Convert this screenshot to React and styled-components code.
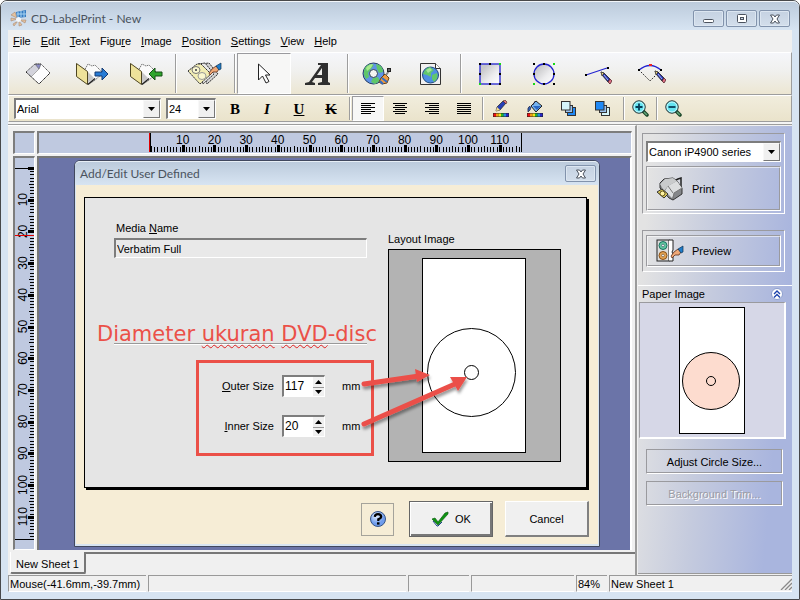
import React from "react";
import styled, { createGlobalStyle, css } from "styled-components";

const GlobalStyle = createGlobalStyle`
  *, *::before, *::after { box-sizing: border-box; }
  body { margin: 0; background: #fff; }
  body, button, input, select { font-family: "Liberation Sans", Arial, sans-serif; font-size: 11px; color: #000; }
  button { padding: 0; border: 0; background: none; }
  svg { display: block; flex: none; }
`;

const groove = css`
  border: 1px solid #9a9a9e;
  border-right-color: #fff;
  border-bottom-color: #fff;
`;

const sunken = css`
  border: 2px solid #7d7d7d;
  border-right: 1px solid #fff;
  border-bottom: 1px solid #fff;
`;

/* ---------- window frame ---------- */

const Frame = styled.div`
  display: flex;
  flex-direction: column;
  min-height: 100vh;
  padding: 0 7px 7px;
  border: 1px solid #48494b;
  border-radius: 7px 7px 0 0;
  background: #d7e4f2;
`;

const TitleBar = styled.header`
  display: flex;
  align-items: center;
  gap: 4px;
  height: 29px;
  margin: 0 -7px;
  padding: 5px 9px 0;
  border-top: 1px solid #f2f6fa;
  border-radius: 6px 6px 0 0;
  background: linear-gradient(#bccbdc, #d7e4f2);
`;

const Title = styled.h1`
  flex: 1;
  margin: 0;
  font: 12px/16px Lato, "Open Sans", sans-serif;
  color: #4a535e;
`;

const CaptionButton = styled.button`
  display: grid;
  place-items: center;
  width: 31px;
  height: 17px;
  margin-left: -2px;
  border: 1px solid #8293ac;
  border-radius: 2px;
  background: linear-gradient(#c5d2e2, #d3deeb);
  box-shadow: inset 0 0 0 1px #dce6f1;
`;

const CaptionButtons = styled.div`
  display: flex;
  gap: 4px;
`;

const MenuBar = styled.nav`
  display: flex;
  align-items: center;
  height: 22px;
  background: #f0f0f0;
`;

const MenuItem = styled.button`
  padding: 0 5px;
  line-height: 20px;
`;

/* ---------- toolbars ---------- */

const Toolbar = styled.div`
  display: flex;
  align-items: stretch;
  height: 43px;
  padding: 0 0 0 2px;
  border: 1px solid #fff;
  border-bottom-color: #9d9d9d;
  border-right-color: #9d9d9d;
  background: linear-gradient(#f5f6fa, #f0f0ee 45%, #ece6d2);
`;

const FormatBar = styled(Toolbar)`
  height: 27px;
  padding-left: 5px;
  background: linear-gradient(#f1eddd, #eae3cb);
`;

const BarEdge = styled.div`
  height: 3px;
  border-bottom: 1px solid #9d9d9d;
  background: #f4f4f4;
`;

const ToolButton = styled.button`
  display: grid;
  place-items: center;
  width: ${(p) => p.$w}px;
  ${(p) =>
    p.$on &&
    css`
      ${groove}
      background: #f7f7f6;
    `}
`;

const Separator = styled.div`
  width: 2px;
  margin: 1px 1px 1px 2px;
  border-left: 1px solid #9d9d9d;
  border-right: 1px solid #fff;
`;

const Combo = styled.div`
  display: grid;
  grid-template-columns: 1fr 17px;
  align-self: ${(p) => (p.$w ? "center" : "stretch")};
  width: ${(p) => (p.$w ? p.$w + "px" : "auto")};
  height: 21px;
  margin-right: ${(p) => p.$gap || 0}px;
  ${sunken}
  background: #fff;
`;

const ComboSelect = styled.select`
  grid-area: 1 / 1 / 2 / 3;
  min-width: 0;
  padding: 0 18px 0 1px;
  border: 0;
  outline: 0;
  appearance: none;
  background: transparent;
`;

const ComboArrow = styled.span`
  grid-area: 1 / 2;
  display: grid;
  place-items: center;
  border: 1px solid #f8f8f8;
  border-right-color: #777;
  border-bottom-color: #777;
  background: #f0f0f0;
  pointer-events: none;
`;

const Letter = styled.span`
  font: ${(p) => (p.$italic ? "italic" : "normal")} bold 15px/18px "Liberation Serif", serif;
  text-decoration: ${(p) => p.$line || "none"};
`;

/* ---------- work area ---------- */

const Main = styled.main`
  display: grid;
  grid-template-columns: 1fr 155px;
  flex: 1;
  background: #f0f0f0;
`;

const Work = styled.section`
  display: flex;
  flex-direction: column;
  min-width: 0;
  border-right: 2px solid #9b9b9b;
  border-top: 1px solid #fff;
`;

const Sheet = styled.div`
  display: grid;
  flex: 1;
  grid-template: 23px 1fr / 22px 1fr;
  gap: 2px;
  padding: 5px 3px 2px 5px;
`;

const Ruler = styled.div`
  ${sunken}
  overflow: hidden;
  background: #bfc9e0;
`;

const RulerSvg = styled.svg`
  width: 100%;
  height: 100%;
  font: 12px "Liberation Sans", Arial, sans-serif;
`;

const Canvas = styled.div`
  display: flex;
  border: 2px solid #777;
  border-width: 2px 2px 0 2px;
  border-right-color: #fff;
  padding: 2px 30px 3px 35px;
  background: #6b74a8;
`;

const Tabs = styled.div`
  display: flex;
  height: 23px;
  padding-left: 2px;
`;

const Tab = styled.button`
  width: 76px;
  height: 22px;
  padding-top: 3px;
  border: 1px solid #fff;
  border-top: 0;
  border-right: 2px solid #777;
  border-bottom: 2px solid #777;
  border-radius: 0 0 2px 2px;
`;

const TabLine = styled.div`
  flex: 1;
  border-top: 2px solid #777;
`;

/* ---------- dialog ---------- */

const DialogBox = styled.section`
  display: flex;
  flex-direction: column;
  flex: 1;
  border: 1px solid #41485e;
  border-radius: 6px 6px 0 0;
  padding: 0 1px 2px;
  background: #d7e4f2;
`;

const DialogTitle = styled.header`
  display: flex;
  align-items: center;
  justify-content: space-between;
  height: 24px;
  margin: 0 -1px;
  padding: 0 3px 0 5px;
  border-top: 1px solid #e8eff6;
  border-radius: 5px 5px 0 0;
  background: linear-gradient(#bccbdc, #d7e4f2);
`;

const DialogName = styled.h2`
  margin: 0;
  font: 12px/16px Lato, "Open Sans", sans-serif;
  color: #4a535e;
`;

const DialogBody = styled.div`
  display: flex;
  flex-direction: column;
  flex: 1;
  padding: 12px 11px 7px 8px;
  background: #f6edd6;
`;

const Panel = styled.div`
  position: relative;
  display: flex;
  flex: 1;
  justify-content: space-between;
  padding: 20px 25px 25px 29px;
  border: 1px solid #000;
  box-shadow: 2px 2px 0 #000;
  background: #e5e5e5;
`;

const Fields = styled.div`
  display: flex;
  flex-direction: column;
  width: 253px;
`;

const FieldLabel = styled.label`
  padding-left: 2px;
  line-height: 20px;
`;

const MediaInput = styled.input`
  height: 20px;
  padding: 0 1px;
  ${sunken}
  border-radius: 0;
  background: #e9e9e9;
`;

const Divider = styled.hr`
  width: 100%;
  margin: 85px 0 15px;
  border: 0;
  border-top: 1px solid #999;
  border-bottom: 1px solid #fff;
`;

const SizeGroup = styled.div`
  display: flex;
  flex-direction: column;
  gap: 18px;
  margin-left: 82px;
  width: 178px;
  height: 96px;
  padding: 12px 11px 12px 21px;
  border: 3px solid #eb5048;
`;

const SizeRow = styled.div`
  display: grid;
  grid-template-columns: 54px 43px 1fr;
  gap: 8px;
  align-items: center;
  height: 22px;
`;

const SizeLabel = styled.label`
  text-align: right;
  white-space: nowrap;
`;

const Unit = styled.span`
  padding-left: 9px;
`;

const Spin = styled.div`
  display: grid;
  grid-template-columns: 1fr 11px;
  height: 22px;
  ${sunken}
  background: #fff;
`;

const SpinInput = styled.input`
  min-width: 0;
  width: 100%;
  padding: 0 0 2px 1px;
  border: 0;
  outline: 0;
  background: transparent;
  font-size: 12px;
`;

const SpinButtons = styled.div`
  display: grid;
  grid-template-rows: 1fr 1fr;
  background: #f0f0f0;
`;

const SpinButton = styled.button`
  display: grid;
  place-items: center;
  & + & {
    border-top: 1px solid #999;
  }
`;

const Layout = styled.figure`
  display: flex;
  flex-direction: column;
  width: 173px;
  margin: 0;
  padding-top: 13px;
`;

const Caption = styled.figcaption`
  line-height: 16px;
  padding-bottom: 2px;
`;

const LayoutView = styled.div`
  display: grid;
  flex: 1;
  place-items: center;
  padding-right: 1px;
  border: 1px solid #000;
  background: #b3b3b3;
`;

const Note = styled.p`
  position: absolute;
  left: 12px;
  top: 122px;
  margin: 0;
  font: 21px/28px "DejaVu Sans", Verdana, sans-serif;
  color: #eb5048;
  white-space: nowrap;
`;

const Misspelt = styled.span`
  text-decoration: underline wavy #e02020 1px;
  text-decoration-skip-ink: none;
  text-underline-offset: 3px;
`;

const Arrows = styled.svg`
  position: absolute;
  inset: 0;
  width: 100%;
  height: 100%;
  pointer-events: none;
`;

const Actions = styled.div`
  display: flex;
  align-items: center;
  justify-content: flex-end;
  padding-top: 13px;
  margin-right: -2px;
`;

const HelpButton = styled.button`
  display: grid;
  place-items: center;
  width: 33px;
  height: 33px;
  margin-right: 15px;
  border: 1px solid #a5a39b;
`;

const DialogButton = styled.button`
  display: flex;
  align-items: center;
  justify-content: center;
  gap: 6px;
  width: 84px;
  height: 36px;
  border: 1px solid #fff;
  border-right: 2px solid #808080;
  border-bottom: 2px solid #808080;
  margin-left: ${(p) => (p.$primary ? 0 : 12)}px;
  background: #f0f0f0;
  ${(p) =>
    p.$primary &&
    css`
      border: 1px solid #666;
      box-shadow: inset 1px 1px 0 #fff, inset -2px -2px 0 #777;
    `}
`;

/* ---------- side panel ---------- */

const Side = styled.aside`
  display: flex;
  flex-direction: column;
  margin: 1px 0 1px 1px;
  border-bottom: 1px solid #999;
  background: linear-gradient(95deg, #e3e3e3 8%, #c5cbde 45%, #a9b5de 85%);
`;

const SideGroup = styled.div`
  display: flex;
  flex-direction: column;
  gap: 4px;
  margin: ${(p) => p.$top}px 7px 0 4px;
  padding: ${(p) => p.$pad};
  ${groove}
`;

const SideButton = styled.button`
  display: flex;
  align-items: center;
  gap: 8px;
  height: ${(p) => p.$h}px;
  padding-left: 9px;
  ${groove}
  box-shadow: inset 1px 1px 0 #ffffff90, inset -1px -1px 0 #9a9a9e;
`;

const Adjust = styled.button`
  height: 25px;
  margin: ${(p) => p.$top}px 9px 0 8px;
  ${groove}
  box-shadow: inset -1px -1px 0 #9a9a9e;
  &:disabled {
    color: #9c9ca4;
    text-shadow: 1px 1px 0 #fff;
  }
`;

const PaperHead = styled.h2`
  display: flex;
  align-items: center;
  justify-content: space-between;
  height: 17px;
  margin: 13px 0 0;
  padding: 0 9px 0 4px;
  border-top: 1px solid #fff;
  font-size: 11px;
  font-weight: normal;
`;

const Fold = styled.button`
  display: grid;
  place-items: center;
`;

const PaperView = styled.div`
  display: grid;
  place-items: center;
  height: 137px;
  margin: 0 6px 0 1px;
  ${groove}
  border-right-width: 2px;
  border-bottom-width: 2px;
  background: #d6d7e7;
`;

/* ---------- status bar ---------- */

const StatusBar = styled.footer`
  display: grid;
  grid-template-columns: 138px 1fr 61px 103px 31px 183px;
  gap: 2px;
  height: 17px;
  background: #f0f0f0;
`;

const StatusCell = styled.div`
  display: flex;
  align-items: center;
  justify-content: space-between;
  min-width: 0;
  padding-left: 1px;
  border-top: 1px solid #999;
  border-left: 1px solid #999;
  border-bottom: 1px solid #fff;
  white-space: nowrap;
`;

/* ---------- drawings ---------- */

const Icon = ({ w = 32, h = w, children }) => (
  <svg width={w} height={h} viewBox={`0 0 ${w} ${h}`} aria-hidden="true">
    {children}
  </svg>
);

const DownArrow = ({ up }) => (
  <Icon w={7} h={4}>
    <path d={up ? "M0 4h7L3.5 0z" : "M0 0h7L3.5 4z"} />
  </Icon>
);

const LogoIcon = () => (
  <Icon w={17}>
    <path d="M1 5l6 3-2-6zM1 11l6-2-6-1zM4 16l4-5-5 3zM9 16l0-5 3 4zM15 13l-5-3 6 0z" fill="#e5c29d" stroke="#a98974" strokeWidth=".6" />
    <path d="M6 2l10-2v7l-9 1z" fill="#357bc2" />
    <path d="M8 2v5M11 1v6M14 1v6M7 4h9" stroke="#a7d4f2" />
    <circle cx="8.5" cy="9.5" r="2.5" fill="#f4f7fb" />
  </Icon>
);

const NewIcon = () => (
  <Icon w={26} h={22}>
    <path d="M1 9L10 1h6l9 9-11 11z" fill="#fdfdfe" />
    <path d="M1 9L10 1l4 5-8 8z" fill="#d3d3dc" />
    <path d="M10 1h6l-2 5z" fill="#8c8cc8" stroke="#555" strokeWidth=".6" />
    <path d="M14 6l-8 8" stroke="#aaa" />
    <path d="M1 9L10 1h6l9 9" fill="none" stroke="#555" strokeDasharray="1.5 .6" />
    <path d="M1 9l13 12 11-11" fill="none" stroke="#222" strokeDasharray="1.5 .4" />
  </Icon>
);

const FolderIcon = ({ save }) => (
  <Icon w={34} h={24}>
    <path d="M8 11l5-9 4 2 3-1 8 8-9 8-6 3z" fill="#fafafa" stroke="#777" strokeDasharray="1.5 .7" />
    <path d="M13 10v11l6-5z" fill="#c8c8c8" />
    <path d="M1.500 1.500l11 8v13l-11-8z" fill="#eee29a" stroke="#4d4520" />
    <path d="M13 22.500l7-6" stroke="#222" strokeWidth="1.500" />
    {save ? (
      <path d="M20 12l6-6v4h7v4h-7v4z" fill="#2fa52d" stroke="#164f17" />
    ) : (
      <path d="M33 12l-6-6v4h-7v4h7v4z" fill="#277bd4" stroke="#153a73" />
    )}
  </Icon>
);

const Hand = ({ x, y }) => (
  <g transform={`translate(${x} ${y})`}>
    <path d="M0 9l3-4 4-3 3 3-2 3H4l-3 3z" fill="#efa877" stroke="#5c2d19" strokeWidth=".8" />
    <path d="M7 2l5-3v6l-2 1z" fill="#1e7bc8" stroke="#123451" strokeWidth=".7" />
  </g>
);

const MediaIcon = () => (
  <Icon w={36} h={24}>
    <path d="M14 2l8-1 9 11-11 10z" fill="#d4d4d4" stroke="#333" strokeDasharray="2 .6" />
    <path d="M11 2l7-1 9 11-11 10z" fill="#e8e8e8" stroke="#333" strokeDasharray="2 .6" />
    <path d="M1 9l9-7h4l10 10-11 10z" fill="#f2edb4" stroke="#333" strokeDasharray="2 .5" />
    <ellipse cx="9" cy="8" rx="4" ry="3.500" fill="#faf7cf" stroke="#777" />
    <rect x="8" y="7" width="2" height="2" fill="#666" />
    <ellipse cx="15" cy="14" rx="4" ry="3.500" fill="#faf7cf" stroke="#999" />
    <Hand x={22} y={2} />
  </Icon>
);

const CursorIcon = () => (
  <Icon w={14} h={22}>
    <path d="M1.500 1v16l4-4 3.500 7 3-1.500-3.500-6.500h4.500z" fill="#fff" stroke="#222" />
  </Icon>
);

const WordArtIcon = () => (
  <Icon w={26} h={24}>
    <path d="M0 23v-2l4-1L16 3h-3V1h10v19l2 1v2H13v-2l4-1v-4h-7l-3 4 3 1v2zM12 13h5V6z" fill="#2f2f2f" fillRule="evenodd" />
  </Icon>
);

const DiscIcon = () => (
  <Icon w={30} h={24}>
    <circle cx="11.5" cy="11.5" r="10.5" fill="#5f93e6" stroke="#243c64" />
    <path d="M2 13Q1 4 8 2l4 1-3 4-3 4 1 4-3 2zM14 2q7 1 7 8l-4 1-2-4zM11 16l5-1 2 4-5 3-4-2z" fill="#5fc66a" />
    <path d="M4 6q3-4 7-4l-2 4-4 3z" fill="#a8e98d" />
    <circle cx="11.5" cy="11.5" r="4" fill="#f4f4f2" stroke="#345" />
    <path d="M19 16l4-4 4 4-2 5-5 1-3-2z" fill="#ee9c43" stroke="#684014" />
    <path d="M20 16l5 4M18 19l3 3" stroke="#326cc5" strokeWidth="2" />
    <path d="M24 13l3-4" stroke="#888" strokeWidth="2" />
    <rect x="25.500" y="6.500" width="3" height="3" fill="#666" stroke="#222" />
  </Icon>
);

const PictureIcon = () => (
  <Icon w={24} h={24}>
    <path d="M1.500 1.500h15l5 5v16h-20z" fill="#f1f1f1" stroke="#333" />
    <path d="M16.500 1.500v5h5" fill="#fff" stroke="#333" />
    <circle cx="11.500" cy="13" r="8" fill="#4f8fe2" stroke="#234c80" />
    <path d="M4 12q2-6 7-7l4 3-3 3v4l-4-2zM13 13l5-2q2 5-3 9l-2-3z" fill="#62c76b" />
    <path d="M7 8l4-2 2 2-4 3z" fill="#a4e59b" />
  </Icon>
);

const Handles = ({ pts, green }) => (
  <>
    {pts.map(([x, y], i) => (
      <rect key={i} x={x - 1} y={y - 1} width="2" height="2" fill={green.includes(i) ? "#16d916" : "#000"} />
    ))}
  </>
);

const ShapeGradient = ({ id }) => (
  <linearGradient id={id} x1="0" y1="0" x2="1" y2="1">
    <stop offset=".2" stopColor="#c8c8ca" />
    <stop offset=".6" stopColor="#ececee" />
    <stop offset="1" stopColor="#fff" />
  </linearGradient>
);

const corners = [[2, 2], [12, 2], [22, 2], [2, 12], [22, 12], [2, 22], [12, 22], [22, 22]];

const RectIcon = () => (
  <Icon w={24}>
    <ShapeGradient id="rectFill" />
    <rect x="2" y="2" width="20" height="20" fill="url(#rectFill)" stroke="#2323cf" strokeWidth="1.300" />
    <Handles green={[2, 5]} pts={corners} />
  </Icon>
);

const CircleIcon = () => (
  <Icon w={24}>
    <ShapeGradient id="circleFill" />
    <circle cx="12" cy="12" r="10" fill="url(#circleFill)" stroke="#2323cf" strokeWidth="1.300" />
    <Handles green={[2, 5]} pts={corners} />
  </Icon>
);

const Pencil = ({ x, y }) => (
  <g transform={`translate(${x} ${y})`}>
    <path d="M0 0l3 1 6 6-2 3-6-7z" fill="#2532a8" stroke="#222" strokeWidth=".8" />
    <path d="M0 0l3 1-2 3z" fill="#f5dd8b" stroke="#222" strokeWidth=".6" />
    <path d="M3 3l4 5" stroke="#a6b4ff" />
    <path d="M9 7l-2 3 2 2 2-3z" fill="#dd7084" stroke="#42141b" strokeWidth=".7" />
  </g>
);

const LineIcon = () => (
  <Icon w={28} h={22}>
    <path d="M2 12L23 5" stroke="#2424d0" strokeWidth="1.300" />
    <Handles green={[]} pts={[[2, 12], [24, 5]]} />
    <Pencil x={17} y={9} />
  </Icon>
);

const ArcIcon = () => (
  <Icon w={28} h={22}>
    <path d="M1 7Q12-2 23 7" fill="none" stroke="#2424d0" strokeWidth="1.300" />
    <path d="M1 7l11 11 11-11" fill="none" stroke="#111" strokeDasharray="1.500 1.500" />
    <Handles green={[]} pts={[[1, 7], [23, 7]]} />
    <rect x="11" y="1" width="3" height="2" fill="#e22" />
    <Pencil x={17} y={8} />
  </Icon>
);

const alignRows = {
  Left: [[0, 14], [0, 10], [0, 14], [0, 10], [0, 14], [0, 10]],
  Center: [[0, 14], [2, 10], [0, 14], [2, 10], [0, 14], [2, 10]],
  Right: [[0, 14], [4, 10], [0, 14], [4, 10], [0, 14], [4, 10]],
  Justify: [[0, 14], [0, 14], [0, 14], [0, 14], [0, 14], [0, 14]],
};

const AlignIcon = ({ kind }) => (
  <Icon w={14} h={11}>
    {alignRows[kind].map(([x, w], i) => (
      <rect key={i} x={x} y={i * 2} width={w} height="1" />
    ))}
  </Icon>
);

const Palette = () => (
  <>
    <rect x="0" y="13" width="16" height="4" fill="#222" />
    {["#e11", "#f39a13", "#f3e618", "#25b525", "#1e8fdc", "#2525c8"].map((c, i) => (
      <rect key={c} x={i * 2.5 + 0.5} y="13.500" width="2.500" height="3" fill={c} />
    ))}
  </>
);

const PenColorIcon = () => (
  <Icon w={16} h={18}>
    <path d="M3 11l1-4 6-6 3 2-6 7z" fill="#2740b8" stroke="#222" strokeWidth=".7" />
    <path d="M10 1l2-1 2 2-1 2z" fill="#d77783" stroke="#421" strokeWidth=".6" />
    <path d="M3 11l1-4 3 3z" fill="#f5dd8b" />
    <Palette />
  </Icon>
);

const FillColorIcon = () => (
  <Icon w={16} h={18}>
    <path d="M4 6l5-5 6 5-6 6z" fill="#75b3ee" stroke="#222" />
    <path d="M6 6l4 4 4-4z" fill="#2a67c4" />
    <path d="M8 1L6 5M3 6q-3 1-2 6 3-2 3-5" fill="#315fae" stroke="#224" strokeWidth=".7" />
    <Palette />
  </Icon>
);

const StackIcon = ({ front }) => (
  <Icon w={16} h={16}>
    <rect x="6.500" y="6.500" width="8" height="8" fill={front ? "#2089f5" : "#d5f5fb"} stroke="#333" />
    <rect x="4.500" y="4.500" width="7" height="7" fill="#9cc3ee" stroke="#333" />
    <rect x=".5" y=".5" width="8.500" height="8.500" fill={front ? "#d5f5fb" : "#2089f5"} stroke="#333" />
  </Icon>
);

const ZoomIcon = ({ plus }) => (
  <Icon w={17} h={17}>
    <path d="M11 11l4 4" stroke="#174425" strokeWidth="3.500" strokeLinecap="round" />
    <path d="M12 12l3 3" stroke="#63a57c" strokeWidth="1.500" />
    <circle cx="7" cy="7" r="6.200" fill="#63e4f1" stroke="#222" />
    <circle cx="7" cy="7" r="5" fill="none" stroke="#c8fbff" />
    <path d={plus ? "M3.500 7h7M7 3.500v7" : "M3.500 7h7"} stroke="#073e59" strokeWidth="1.800" />
  </Icon>
);

const PrinterIcon = () => (
  <Icon w={28} h={24}>
    <path d="M18 4l4-2 3-1v10" fill="none" stroke="#222" strokeWidth="1.500" />
    <path d="M4 6l4-4 9-1 4 3 5 7v6l-9 6-4-2-9-10z" fill="#85878a" stroke="#333" />
    <path d="M4 7l5-5 8-1 4 3-9 5-4 5z" fill="#c9cbcc" />
    <path d="M9 14l3-5 9-5 5 7-8 5-2 5z" fill="#dcdedf" />
    <path d="M12 9l5 7M17 22l1-6 8-5" fill="none" stroke="#777" />
    <path d="M1 15l5-3 6 5-4 4z" fill="#e3d05d" stroke="#333" />
    <circle cx="6.500" cy="16.500" r="2.500" fill="#fff3a2" stroke="#5c5018" />
  </Icon>
);

const PreviewIcon = () => (
  <Icon w={28} h={24}>
    <rect x="1" y="1" width="12" height="21" fill="#ddd" stroke="#222" />
    <path d="M13 1h4v10l-1 2 1 2v7h-4" fill="#fff" stroke="#222" />
    <circle cx="7" cy="6.500" r="4" fill="#61c7a0" stroke="#187161" />
    <circle cx="7" cy="6.500" r="1.300" fill="#fff" stroke="#345" strokeWidth=".6" />
    <circle cx="7" cy="16.500" r="4" fill="#e3a252" stroke="#8a5117" />
    <circle cx="7" cy="16.500" r="1.300" fill="#fff" stroke="#543" strokeWidth=".6" />
    <Hand x={15} y={8} />
  </Icon>
);

const HelpIcon = () => (
  <Icon w={18}>
    <defs>
      <radialGradient id="helpFill" cx=".4" cy=".3">
        <stop offset="0" stopColor="#e7f2ff" />
        <stop offset="1" stopColor="#6f9cec" />
      </radialGradient>
    </defs>
    <circle cx="9" cy="9" r="7.500" fill="url(#helpFill)" stroke="#355486" />
    <path d="M5.800 6.800Q6 4.200 9 4.200T12.200 6.800Q12 8.300 9.300 9.200V11" fill="none" stroke="#000" strokeWidth="2.200" />
    <rect x="8" y="12.300" width="2.500" height="2.300" />
  </Icon>
);

const CheckIcon = () => (
  <Icon w={18} h={16}>
    <path d="M1 8l3-1 3 4 7-9 3-1v2L7 14z" fill="#0c9412" stroke="#156017" strokeWidth=".7" />
    <path d="M2 10l4 5h1l4-4" fill="none" stroke="#154386" />
  </Icon>
);

const CloseIcon = () => (
  <Icon w={12} h={10}>
    <path d="M1.500 1h3L6 3l1.500-2h3L8 5l2.500 4h-3L6 7 4.500 9h-3L4 5z" fill="#fff" stroke="#4b525e" />
  </Icon>
);

const FoldIcon = () => (
  <Icon w={12} h={12}>
    <circle cx="6" cy="6" r="5.500" fill="#fff" stroke="#8d9fce" />
    <path d="M3 6l3-3 3 3M3 9.500l3-3 3 3" fill="none" stroke="#1c42ac" strokeWidth="1.400" />
  </Icon>
);

const GripIcon = () => (
  <Icon w={12} h={12}>
    <path d="M1 12L12 1M5 12l7-7M9 12l3-3" stroke="#8a8a8a" strokeWidth="1.300" />
  </Icon>
);

const Paper = ({ w, h, cx, cy, r, hole, fill }) => (
  <Icon w={w} h={h}>
    <rect x=".5" y=".5" width={w - 1} height={h - 1} fill="#fff" stroke="#000" />
    <circle cx={cx} cy={cy} r={r} fill={fill} stroke="#000" />
    <circle cx={cx} cy={cy} r={hole} fill="none" stroke="#000" />
  </Icon>
);

/* ---------- rulers ---------- */

const MM = 3.17;
const ticks = Array.from({ length: 117 }, (_, i) => i);
const tens = Array.from({ length: 11 }, (_, i) => (i + 1) * 10);

function HorizontalRuler() {
  return (
    <RulerSvg shapeRendering="crispEdges">
      {ticks.map((n) => {
        const x = Math.round(112 + n * MM);
        const major = n > 0 && n % 10 === 0;
        return <rect key={n} x={major ? x - 1 : x} y={major ? 12 : n % 5 ? 14 : 13} width={major ? 3 : 1} height={major ? 7 : n % 5 ? 5 : 6} />;
      })}
      {tens.map((n) => (
        <text key={n} x={112 + n * MM} y="11" textAnchor="middle">{n}</text>
      ))}
      <rect x="110" y="0" width="1" height="19" fill="#e00000" />
      <rect x="111" y="0" width="1" height="19" />
      <rect x="482" y="0" width="1" height="19" />
    </RulerSvg>
  );
}

function VerticalRuler() {
  return (
    <RulerSvg shapeRendering="crispEdges">
      {ticks.map((n) => {
        const y = Math.round(10 + n * MM);
        const major = n % 10 === 0;
        return <rect key={n} x={major ? 13 : n % 5 ? 15 : 14} y={major ? y - 1 : y} width={major ? 6 : n % 5 ? 4 : 5} height={major ? 3 : 1} />;
      })}
      {tens.map((n) => (
        <text key={n} transform={`translate(12 ${10 + n * MM}) rotate(-90)`} textAnchor="middle">{n}</text>
      ))}
      <rect x="0" y="10" width="19" height="1" />
      <rect x="0" y="381" width="19" height="1" />
      <rect x="0" y="77" width="19" height="1" fill="#e00000" />
    </RulerSvg>
  );
}

/* ---------- content ---------- */

const menus = [["", "F", "ile"], ["", "E", "dit"], ["", "T", "ext"], ["Figu", "r", "e"], ["", "I", "mage"], ["", "P", "osition"], ["", "S", "ettings"], ["", "V", "iew"], ["", "H", "elp"]];

const mainTools = [
  ["New", <NewIcon />],
  ["Open", <FolderIcon />],
  ["Save", <FolderIcon save />],
  null,
  ["Select media", <MediaIcon />],
  null,
  ["Select", <CursorIcon />, true],
  ["Text", <WordArtIcon />],
  null,
  ["Background", <DiscIcon />],
  ["Image", <PictureIcon />],
  null,
  ["Rectangle", <RectIcon />],
  ["Circle", <CircleIcon />],
  ["Line", <LineIcon />],
  ["Arc", <ArcIcon />],
];

const formatTools = [
  ["Bold", <Letter>B</Letter>],
  ["Italic", <Letter $italic>I</Letter>],
  ["Underline", <Letter $line="underline">U</Letter>],
  ["Strikethrough", <Letter $line="line-through">K</Letter>],
  null,
  ["Align left", <AlignIcon kind="Left" />, true],
  ["Align center", <AlignIcon kind="Center" />],
  ["Align right", <AlignIcon kind="Right" />],
  ["Justify", <AlignIcon kind="Justify" />],
  null,
  ["Line color", <PenColorIcon />],
  ["Fill color", <FillColorIcon />, false, 36],
  ["Bring to front", <StackIcon front />],
  ["Send to back", <StackIcon />, false, 36],
  null,
  ["Zoom in", <ZoomIcon plus />, false, 28],
  null,
  ["Zoom out", <ZoomIcon />, false, 28],
];

function Tools({ items, width }) {
  return items.map((item, i) =>
    item ? (
      <ToolButton key={i} $w={item[3] || width} $on={item[2]} aria-label={item[0]} aria-pressed={item[2]}>
        {item[1]}
      </ToolButton>
    ) : (
      <Separator key={i} />
    )
  );
}

function ComboBox({ label, value, width, gap }) {
  return (
    <Combo $w={width} $gap={gap}>
      <ComboSelect aria-label={label} defaultValue={value}>
        <option>{value}</option>
      </ComboSelect>
      <ComboArrow>
        <DownArrow />
      </ComboArrow>
    </Combo>
  );
}

function SizeField({ id, first, rest, value }) {
  return (
    <SizeRow>
      <SizeLabel htmlFor={id}>
        <u>{first}</u>
        {rest}
      </SizeLabel>
      <Spin>
        <SpinInput id={id} inputMode="numeric" defaultValue={value} />
        <SpinButtons>
          <SpinButton aria-label="Increase">
            <DownArrow up />
          </SpinButton>
          <SpinButton aria-label="Decrease">
            <DownArrow />
          </SpinButton>
        </SpinButtons>
      </Spin>
      <Unit>mm</Unit>
    </SizeRow>
  );
}

function UserDefinedDialog() {
  return (
    <DialogBox role="dialog" aria-labelledby="dialog-name">
      <DialogTitle>
        <DialogName id="dialog-name">Add/Edit User Defined</DialogName>
        <CaptionButton aria-label="Close dialog">
          <CloseIcon />
        </CaptionButton>
      </DialogTitle>
      <DialogBody>
        <Panel>
          <Fields>
            <FieldLabel htmlFor="media">
              Media <u>N</u>ame
            </FieldLabel>
            <MediaInput id="media" defaultValue="Verbatim Full" readOnly />
            <Divider />
            <SizeGroup>
              <SizeField id="outer" first="O" rest="uter Size" value="117" />
              <SizeField id="inner" first="I" rest="nner Size" value="20" />
            </SizeGroup>
          </Fields>
          <Layout>
            <Caption>Layout Image</Caption>
            <LayoutView>
              <Paper w={104} h={195} cx={49.5} cy={114.5} r={44} hole={7} fill="none" />
            </LayoutView>
          </Layout>
          <Note>
            Diameter <Misspelt>ukuran</Misspelt> <Misspelt>DVD</Misspelt>-disc
          </Note>
          <Arrows aria-hidden="true">
            <defs>
              <filter id="arrowShadow" x="-20%" y="-50%" width="140%" height="200%">
                <feDropShadow dx="1" dy="3" stdDeviation="1.5" floodOpacity=".4" />
              </filter>
            </defs>
            <g fill="#eb5048" stroke="#eb5048" filter="url(#arrowShadow)">
              <path d="M279 186L334 178" strokeWidth="5" strokeLinecap="round" />
              <path d="M330 171l15 6-13 7z" stroke="none" />
              <path d="M279 226L370 186" strokeWidth="5" strokeLinecap="round" />
              <path d="M365 179l17 0-9 14z" stroke="none" />
            </g>
          </Arrows>
        </Panel>
        <Actions>
          <HelpButton aria-label="Help">
            <HelpIcon />
          </HelpButton>
          <DialogButton $primary>
            <CheckIcon />
            OK
          </DialogButton>
          <DialogButton>Cancel</DialogButton>
        </Actions>
      </DialogBody>
    </DialogBox>
  );
}

export default function App() {
  return (
    <>
      <GlobalStyle />
      <Frame>
        <TitleBar>
          <LogoIcon />
          <Title>CD-LabelPrint - New</Title>
          <CaptionButtons>
            <CaptionButton aria-label="Minimize">
              <Icon w={12} h={10}>
                <rect x=".5" y="5.500" width="10" height="3" rx="1" fill="#fff" stroke="#4b525e" />
              </Icon>
            </CaptionButton>
            <CaptionButton aria-label="Maximize">
              <Icon w={12} h={10}>
                <rect x="1.500" y=".5" width="9" height="8" rx="1" fill="#fff" stroke="#4b525e" />
                <rect x="4.500" y="3.500" width="3" height="2" fill="#cbd6e4" stroke="#4b525e" />
              </Icon>
            </CaptionButton>
            <CaptionButton aria-label="Close">
              <CloseIcon />
            </CaptionButton>
          </CaptionButtons>
        </TitleBar>
        <MenuBar>
          {menus.map(([a, key, b]) => (
            <MenuItem key={key + b}>
              {a}
              <u>{key}</u>
              {b}
            </MenuItem>
          ))}
        </MenuBar>
        <Toolbar role="toolbar" aria-label="Tools">
          <Tools items={mainTools} width={54} />
        </Toolbar>
        <FormatBar role="toolbar" aria-label="Format">
          <ComboBox label="Font" value="Arial" width={147} gap={5} />
          <ComboBox label="Font size" value="24" width={50} gap={3} />
          <Tools items={formatTools} width={32} />
        </FormatBar>
        <BarEdge />
        <Main>
          <Work>
            <Sheet>
              <Ruler />
              <Ruler>
                <HorizontalRuler />
              </Ruler>
              <Ruler>
                <VerticalRuler />
              </Ruler>
              <Canvas>
                <UserDefinedDialog />
              </Canvas>
            </Sheet>
            <Tabs>
              <Tab>New Sheet 1</Tab>
              <TabLine />
            </Tabs>
          </Work>
          <Side>
            <SideGroup $top={7} $pad="7px 3px 2px">
              <ComboBox label="Printer" value="Canon iP4900 series" />
              <SideButton $h={45}>
                <PrinterIcon />
                Print
              </SideButton>
            </SideGroup>
            <SideGroup $top={16} $pad="4px 3px">
              <SideButton $h={32}>
                <PreviewIcon />
                Preview
              </SideButton>
            </SideGroup>
            <PaperHead>
              Paper Image
              <Fold aria-label="Collapse">
                <FoldIcon />
              </Fold>
            </PaperHead>
            <PaperView>
              <Paper w={66} h={127} cx={32} cy={74} r={28.5} hole={4.5} fill="#fddccf" />
            </PaperView>
            <Adjust $top={10}>Adjust Circle Size...</Adjust>
            <Adjust $top={7} disabled>
              Background Trim...
            </Adjust>
          </Side>
        </Main>
        <StatusBar>
          <StatusCell>Mouse(-41.6mm,-39.7mm)</StatusCell>
          <StatusCell />
          <StatusCell />
          <StatusCell />
          <StatusCell>84%</StatusCell>
          <StatusCell>
            New Sheet 1
            <GripIcon />
          </StatusCell>
        </StatusBar>
      </Frame>
    </>
  );
}
